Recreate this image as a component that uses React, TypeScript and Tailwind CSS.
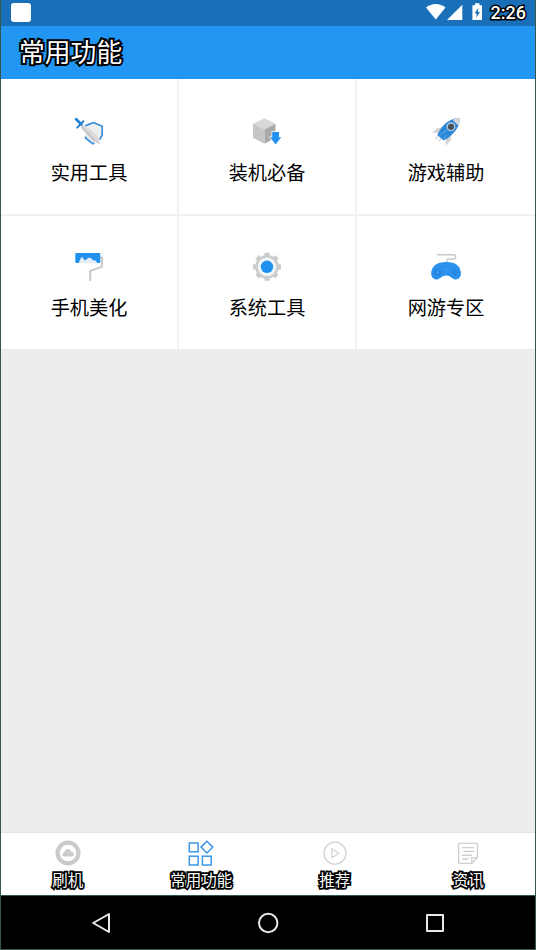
import React from 'react';

interface Item {
  label: string;
  icon: React.ReactNode;
}

const tools: Item[] = [
  {
    label: '实用工具',
    icon: (
      <svg viewBox="0 0 30 30" className="w-[30px] h-[30px]">
        <path d="M12 8.5 L19.5 5.3 L28.2 9.3 L28 18.5 L25.5 23 L19 27 L11.5 21 Z" fill="#eceef0" />
        <path d="M11.2 8.9 L19.5 5.5 L28.2 9.3 V18.3 L25.6 22.6" fill="none" stroke="#3b8fdb" strokeWidth="1.7" strokeLinejoin="round" />
        <path d="M11.6 19.5 V21 L18.8 26.8 L20.5 26" fill="none" stroke="#3b8fdb" strokeWidth="1.7" strokeLinejoin="round" />
        <path d="M9 7 L22.5 17.5 L26.6 27.6 L18 23 L6.8 10.5 Z" fill="#dcdcde" />
        <path d="M8 8.5 L26.6 27.6 L18 23 L6.8 10.5 Z" fill="#c9cacc" />
        <path d="M2.2 2.2 L7.3 7.2" stroke="#2480d2" strokeWidth="2.8" strokeLinecap="round" />
        <path d="M3.2 10.6 L9.4 4.2" stroke="#2480d2" strokeWidth="2" strokeLinecap="round" />
      </svg>
    ),
  },
  {
    label: '装机必备',
    icon: (
      <svg viewBox="0 0 30 30" className="w-[30px] h-[30px]">
        <path d="M12.5 1.2 L23.5 6.8 L12.5 12.6 L1 6.8 Z" fill="#d8d8d8" />
        <path d="M1 6.8 L12.5 12.6 V26.8 L1 20.8 Z" fill="#c6c6c6" />
        <path d="M23.5 6.8 L12.5 12.6 V26.8 L23.5 20.8 Z" fill="#a9a9a9" />
        <path d="M19.6 14.2 H27.6 V19.4 H30 L23.6 28.4 L17 19.4 H19.6 Z" fill="#fff" />
        <path d="M20.2 15 H27 V20.2 H29.2 L23.6 27.4 L18.2 20.2 H20.2 Z" fill="#2191f0" />
      </svg>
    ),
  },
  {
    label: '游戏辅助',
    icon: (
      <svg viewBox="0 0 30 30" className="w-[30px] h-[30px]">
        <path d="M11 10.5 L6.5 11 L1.5 15.8 L8.5 15.8 Z" fill="#d2d2d4" />
        <path d="M20 18.5 L19.6 23.5 L14.6 28.4 L14.8 21.5 Z" fill="#d2d2d4" />
        <path d="M7.2 19 L4.6 22.2 M10 21.5 L7.8 24.2" stroke="#dcdcde" strokeWidth="1.8" />
        <path d="M28.8 1 C29 9 24 17.5 12.5 23.5 L6.3 18 C11.5 6.5 19.5 1.2 28.8 1Z" fill="#2a86d9" />
        <path d="M28.8 1 C28.9 3.8 28.4 6.2 27.2 8.6 L21.5 2.7 C23.8 1.6 26.2 1 28.8 1Z" fill="#d8d8da" />
        <path d="M8.6 18.4 L15.5 13 M12 22 L16 17.5" stroke="#5aa5e6" strokeWidth="1.1" />
        <circle cx="20" cy="9.8" r="3.8" fill="#45525f" stroke="#b4c6d8" strokeWidth="1.4" />
      </svg>
    ),
  },
  {
    label: '手机美化',
    icon: (
      <svg viewBox="0 0 30 30" className="w-[30px] h-[30px]">
        <path d="M26 5.5 H28 V14.6 L16.2 19 V29" fill="none" stroke="#c9c9c9" strokeWidth="2" />
        <rect x="1.3" y="1" width="25" height="10" rx="1" fill="#2191f0" />
        <path d="M4.5 11.2 L7.3 5.2 L8.5 5.2 L10.7 8.6 L14.6 5.8 H16.4 L19.5 8.4 L21.2 8.2 L23.6 11.2 Z" fill="#e6edf3" />
      </svg>
    ),
  },
  {
    label: '系统工具',
    icon: (
      <svg viewBox="0 0 30 30" className="w-[30px] h-[30px]">
        <g fill="#cccccc">
          {[0, 45, 90, 135].map((a) => (
            <rect key={a} x="12.4" y="0.8" width="5.2" height="28" rx="0.6" transform={`rotate(${a} 15 14.8)`} />
          ))}
          <circle cx="15" cy="14.8" r="11.8" />
        </g>
        <circle cx="15" cy="14.8" r="9.3" fill="#eef7fe" />
        <circle cx="15" cy="14.8" r="6.2" fill="#2191f0" />
      </svg>
    ),
  },
  {
    label: '网游专区',
    icon: (
      <svg viewBox="0 0 30 30" className="w-[30px] h-[30px]">
        <path d="M6 2.8 H22.6 C25.3 3 25.3 6.9 22.6 7.1 H17.5 C16 7.1 15.7 8 15.7 10.5" fill="none" stroke="#cacaca" strokeWidth="1.5" />
        <path d="M8 11 C12.5 9.8 18 9.8 22.5 11 C27.5 12.5 30 17.5 29.9 21.5 C29.8 25.5 27.5 27.8 24 27.4 C20.8 27 19.5 23.6 15.2 23.6 C11 23.6 9.5 27 6.3 27.5 C2.8 27.8 0.3 25.5 0.2 21.5 C0.2 17 3 12.5 8 11Z" fill="#2a91ec" />
        <circle cx="6.5" cy="20.3" r="3.8" fill="#2385df" />
        <path d="M6.5 18.2 V22.4 M4.4 20.3 H8.6" stroke="#3a9af0" strokeWidth="1" />
        <g fill="#1d7dd4">
          <circle cx="24" cy="17.9" r="0.9" />
          <circle cx="24" cy="22.5" r="0.9" />
          <circle cx="21.7" cy="20.2" r="0.9" />
          <circle cx="26.3" cy="20.2" r="0.9" />
        </g>
        <path d="M13 17.8 H17.5" stroke="#4aa2f0" strokeWidth="1" />
      </svg>
    ),
  },
];

const tabs: Item[] = [
  {
    label: '刷机',
    icon: (
      <svg viewBox="0 0 28 28" className="w-7 h-7">
        <circle cx="14" cy="14" r="10.4" fill="none" stroke="#cbcbcb" strokeWidth="4.2" />
        <path d="M10.4 17.6 C7.6 17.4 7.7 13.9 10.2 13.7 C10.6 9.2 16.2 8.9 17.2 12.8 C20.6 12.6 21 17.3 17.8 17.6 Z" fill="#cbcbcb" />
      </svg>
    ),
  },
  {
    label: '常用功能',
    icon: (
      <svg viewBox="0 0 28 28" className="w-7 h-7" fill="none" stroke="#3d97e8" strokeWidth="1.5">
        <rect x="2.3" y="4" width="8.8" height="8.8" />
        <rect x="2.3" y="17.2" width="8.8" height="8.8" />
        <rect x="15.4" y="17.2" width="8.8" height="8.8" />
        <path d="M19.9 2.2 L25.8 8.1 L19.9 14 L14 8.1 Z" />
      </svg>
    ),
  },
  {
    label: '推荐',
    icon: (
      <svg viewBox="0 0 28 28" className="w-7 h-7" fill="none" stroke="#d2d2d2" strokeWidth="1.3">
        <circle cx="14" cy="14.2" r="11" />
        <path d="M10.8 9.7 L18 14.2 L10.8 18.7 Z" strokeLinejoin="round" />
      </svg>
    ),
  },
  {
    label: '资讯',
    icon: (
      <svg viewBox="0 0 28 28" className="w-7 h-7" fill="none" stroke="#cfcfcf" strokeWidth="1.4">
        <path d="M5.4 4.4 H22.6 Q23.4 4.4 23.4 5.2 V18.6 L17.8 24.4 H5.4 Q4.6 24.4 4.6 23.6 V5.2 Q4.6 4.4 5.4 4.4Z" />
        <path d="M23.4 18.6 H17.8 V24.4" />
        <path d="M8 8.6 H20 M9.5 12.4 H20 M8 16.2 H18 M8 20 H14.5" />
      </svg>
    ),
  },
];

const App: React.FC = () => {
  return (
    <div className="w-[536px] h-[950px] flex flex-col overflow-hidden border-x border-b border-[#35564f] bg-[#ededed] font-['Roboto','Noto_Sans_CJK_SC',sans-serif]">
      {/* Status bar */}
      <div className="h-[26px] shrink-0 flex items-center justify-between bg-[#1a70b8] pl-2.5 pr-[9px]">
        <div className="w-5 h-[19px] rounded-[3px] bg-white -mt-0.5"></div>
        <div className="flex items-center">
          <svg viewBox="0 0 60 20" className="w-[60px] h-5 -mt-0.5" fill="#fff">
            <path d="M0 5.5 C5.5 0.8 14 0.8 19.5 5.5 L9.8 17.6 Z" />
            <path d="M36.3 2.8 V18 H21 Z" />
            <path d="M49 1.2 H53.5 V3.2 H56 V18 H46.4 V3.2 H49 Z" />
            <path d="M52.4 5.8 L48.6 11.4 H50.8 L50.2 15.8 L54 10 H51.8 Z" fill="#1a70b8" />
          </svg>
          <span className="ml-[5px] text-[18px] leading-none font-medium text-white [-webkit-text-stroke:3px_#000] [paint-order:stroke_fill]">2:26</span>
        </div>
      </div>

      {/* Title */}
      <header className="h-[53px] shrink-0 flex items-center bg-[#2196f3] pl-[18px] pt-0.5">
        <h1 className="text-[25.8px] leading-none text-white [-webkit-text-stroke:4px_#000] [paint-order:stroke_fill]">常用功能</h1>
      </header>

      {/* Tool grid */}
      <div className="grid grid-cols-[176px_176px_178px] grid-rows-[135px_133px] gap-0.5 shrink-0 bg-[#f1f1f1]">
        {tools.map((item, i) => (
          <div key={item.label} className={`flex flex-col items-center bg-white text-black ${i < 3 ? 'pt-[38px]' : 'pt-9'}`}>
            {item.icon}
            <span className="mt-[17px] text-[19.2px] leading-5 whitespace-nowrap">{item.label}</span>
          </div>
        ))}
      </div>

      <main className="flex-1 border-b border-[#e4e4e4]"></main>

      {/* Bottom tabs */}
      <nav className="h-[62px] shrink-0 grid grid-cols-4 bg-white">
        {tabs.map((tab) => (
          <div key={tab.label} className="flex flex-col items-center pt-1.5">
            {tab.icon}
            <span className="mt-1.5 text-[15.5px] leading-4 text-white [-webkit-text-stroke:3.5px_#000] [paint-order:stroke_fill]">{tab.label}</span>
          </div>
        ))}
      </nav>

      {/* System keys */}
      <div className="h-[54px] shrink-0 flex items-center justify-center gap-[143px] bg-black border-t border-[#35564f]">
        <svg viewBox="0 0 24 24" className="w-6 h-6" fill="none" stroke="#e8e8e8" strokeWidth="2" strokeLinejoin="round">
          <path d="M4.2 12 L20 3 V21 Z" />
        </svg>
        <svg viewBox="0 0 24 24" className="w-6 h-6" fill="none" stroke="#e8e8e8" strokeWidth="2">
          <circle cx="12.2" cy="12" r="9.2" />
        </svg>
        <svg viewBox="0 0 24 24" className="w-6 h-6" fill="none" stroke="#e8e8e8" strokeWidth="2" strokeLinejoin="round">
          <rect x="4" y="4" width="16" height="16" />
        </svg>
      </div>
    </div>
  );
};

export default App;
